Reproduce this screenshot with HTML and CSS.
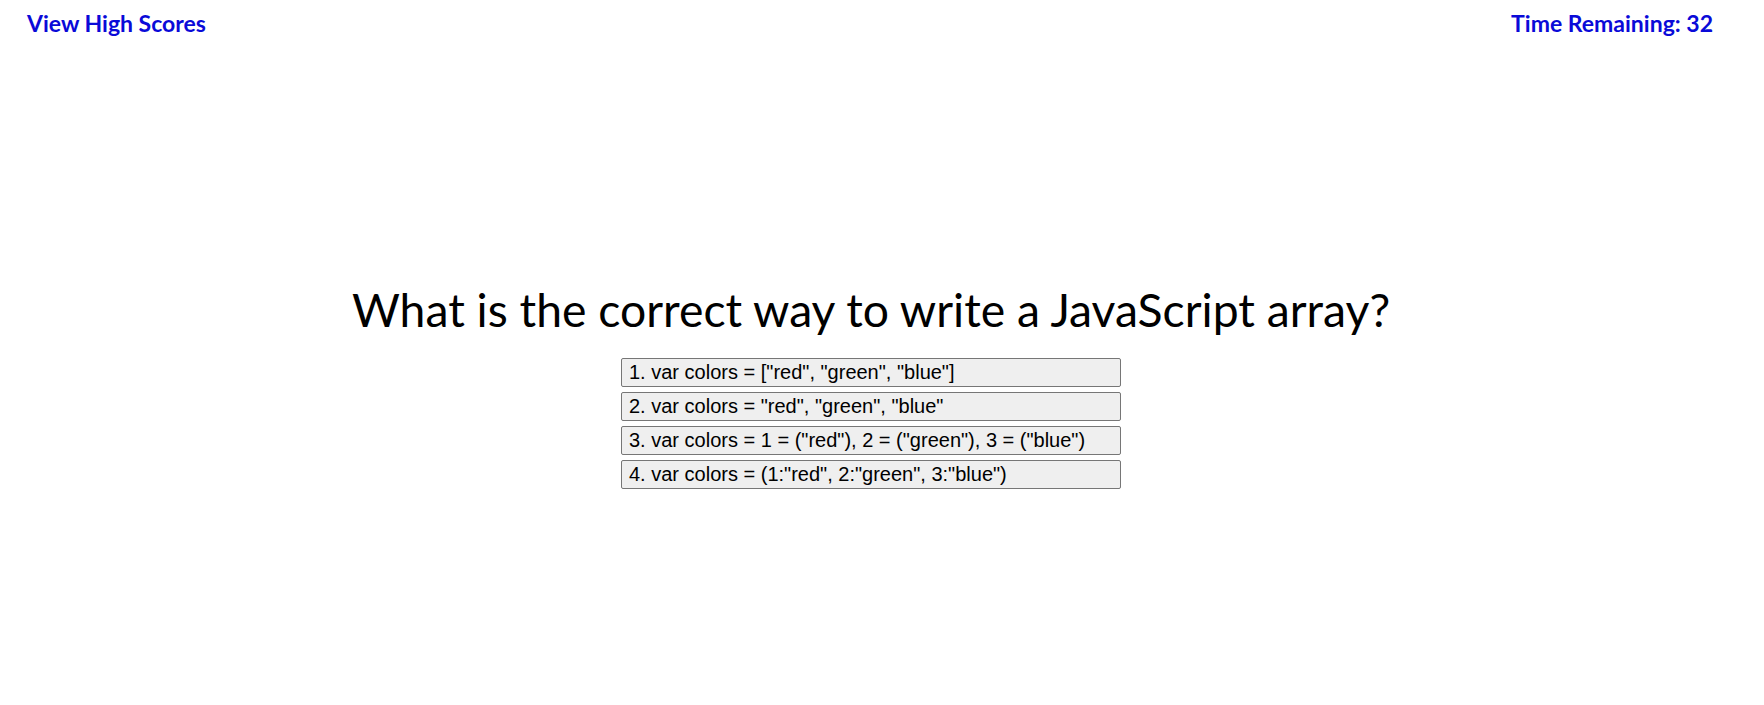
FILE: index.html
```html
<!DOCTYPE html>
<html lang="en">
<head>
<meta charset="utf-8">
<title>Code Quiz</title>
<link rel="stylesheet" href="styles.css">
</head>
<body>
<div class="page">
  <header class="topbar">
    <a class="scores" href="#">View High Scores</a>
    <div class="timer">Time Remaining: <span>32</span></div>
  </header>
  <main class="quiz">
    <h1 class="question">What is the correct way to write a JavaScript array?</h1>
    <div class="answers">
      <button class="answer">1. var colors = ["red", "green", "blue"]</button>
      <button class="answer">2. var colors = "red", "green", "blue"</button>
      <button class="answer">3. var colors = 1 = ("red"), 2 = ("green"), 3 = ("blue")</button>
      <button class="answer">4. var colors = (1:"red", 2:"green", 3:"blue")</button>
    </div>
  </main>
</div>
</body>
</html>
```
FILE: styles.css
```css
html, body {
  margin: 0;
  padding: 0;
  background: #ffffff;
}
body {
  font-family: Lato, "Open Sans", sans-serif;
  color: #000;
}
.page {
  width: calc(100% - 22px);
}
.topbar {
  display: flex;
  justify-content: space-between;
  align-items: flex-start;
  padding: 9px 29px 0 27px;
}
.scores, .timer {
  font-size: 23px;
  font-weight: 700;
  color: #0a0ad8;
  text-decoration: none;
}
.quiz {
  display: flex;
  flex-direction: column;
  align-items: center;
  padding-top: 244px;
}
.question {
  margin: 0 0 21px 0;
  font-size: 46.3px;
  font-weight: 400;
  line-height: 56px;
}
.answers {
  display: flex;
  flex-direction: column;
  gap: 5px;
  width: 500px;
}
.answer {
  box-sizing: border-box;
  width: 100%;
  height: 29px;
  padding: 2px 7px;
  text-align: left;
  font-family: "Liberation Sans", Arial, sans-serif;
  font-size: 20px;
  line-height: 23px;
  color: #000;
  background: #efefef;
  border: 1px solid #767676;
  border-radius: 2px;
}
```
